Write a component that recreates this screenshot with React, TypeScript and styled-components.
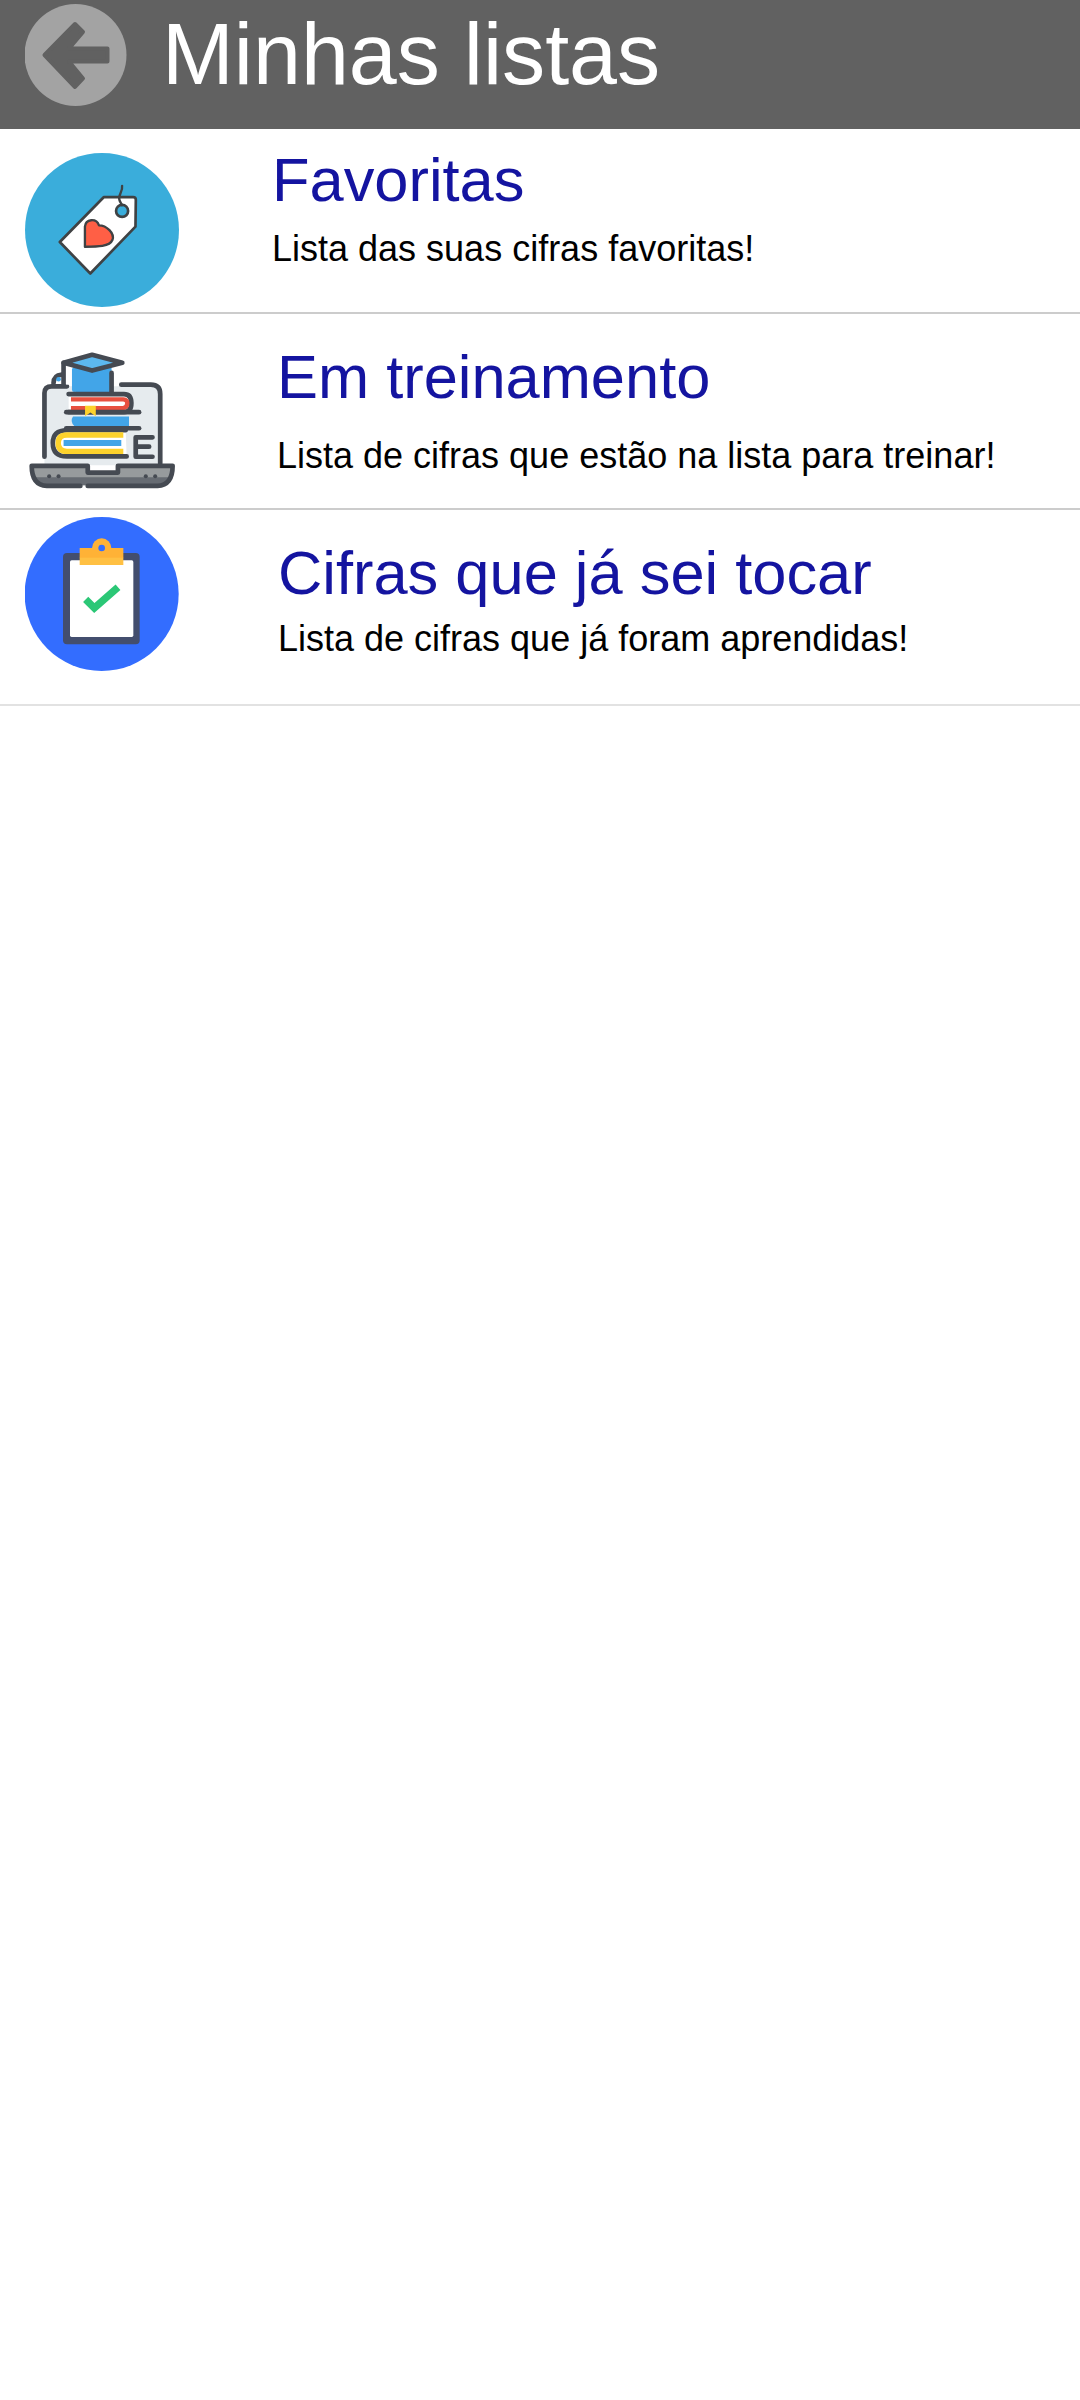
import React from 'react';
import styled, { createGlobalStyle } from 'styled-components';

const GlobalStyle = createGlobalStyle`
  html, body {
    margin: 0;
    padding: 0;
    background: #ffffff;
    font-family: "Liberation Sans", Arial, sans-serif;
  }
`;

const Page = styled.div`
  width: 1080px;
  min-height: 2400px;
  background: #ffffff;
`;

const Header = styled.header`
  height: 129px;
  background: #616161;
  display: flex;
  align-items: flex-start;
  padding: 4px 0 0 25px;
  box-sizing: border-box;
`;

const BackButton = styled.svg`
  width: 102px;
  height: 102px;
  flex: none;
`;

const Title = styled.h1`
  margin: -1px 0 0 35px;
  color: #ffffff;
  font-size: 86.2px;
  font-weight: 400;
  line-height: 102px;
`;

const Row = styled.div<{ $height: number; $line: string }>`
  height: ${props => props.$height}px;
  box-sizing: border-box;
  padding-left: 25px;
  border-bottom: 2px solid ${props => props.$line};
  display: flex;
  align-items: flex-start;
`;

const Icon = styled.svg<{ $top: number }>`
  width: 154px;
  height: 154px;
  flex: none;
  margin-top: ${props => props.$top}px;
`;

const Texts = styled.div<{ $left: number; $top: number }>`
  margin-left: ${props => props.$left}px;
  padding-top: ${props => props.$top}px;
`;

const RowTitle = styled.div`
  color: #1414a0;
  font-size: 61.4px;
  line-height: 74px;
`;

const RowText = styled.div<{ $gap: number }>`
  color: #000000;
  font-size: 36px;
  line-height: 42px;
  margin-top: ${props => props.$gap}px;
`;

const TagIcon = () => (
  <Icon $top={24} viewBox="45 42 460 460">
    <circle cx="275" cy="272" r="230" fill="#3aaddb" />
    <path d="M280 174 H368 Q376 174 376 182 L375 262 L240 402 L149 308 Z" fill="#fff" stroke="#3f4244" strokeWidth="8" strokeLinejoin="round" />
    <circle cx="335" cy="215" r="18" fill="#3aaddb" stroke="#3f4244" strokeWidth="8" />
    <path d="M335 140 C338 158 322 168 327 182 C329 190 333 192 335 198" fill="none" stroke="#3f4244" strokeWidth="7" strokeLinecap="round" />
    <path d="M224 322 L224 262 C226 238 258 236 266 258 C288 258 314 282 306 302 C298 322 262 322 224 322 Z" fill="#ff5f45" stroke="#3f4244" strokeWidth="7" strokeLinejoin="round" />
  </Icon>
);

const LaptopIcon = () => (
  <Icon $top={24} viewBox="75 51 459 459">
    <g fill="none" stroke="#454a52" strokeWidth="14" strokeLinecap="round" strokeLinejoin="round">
      <path d="M133 430 V215 Q133 195 155 195 H470 Q478 195 478 218 V430 Z" fill="#e6ebee" stroke="none" />
      <path d="M133 405 V215 Q133 195 155 195 H200" />
      <path d="M362 190 H450 Q478 190 478 218 V425" />
      <path d="M95 432 H262 V452 H352 V432 H515 Q515 490 470 490 H140 Q95 490 95 432 Z" fill="#979b9d" stroke="none" />
      <path d="M104 466 H506 Q495 490 470 490 H140 Q115 490 104 466 Z" fill="#666b72" stroke="none" />
      <path d="M240 492 H140 Q95 490 95 432 H262 V452 H352 V432 H515 Q515 490 470 492 H262" />
      <path d="M160 186 Q160 162 185 160" />
      <path d="M190 125 V190" fill="none" />
      <path d="M197 130 H222 V190 H197 Z" fill="#fff" stroke="none" />
      <path d="M225 212 V140 H333 V212 Z" fill="#42a5e8" stroke="none" />
      <path d="M333 155 V212" />
      <path d="M222 145 V205" stroke="#42a5e8" />
      <path d="M190 125 L275 101 L365 125 L275 148 Z" fill="#5cb8ee" />
      <path d="M205 218 H370 Q392 218 392 245 Q392 272 370 272 H205" fill="#fff" />
      <path d="M212 234 H368 Q380 235 380 245 Q380 258 368 260 H212" stroke="#e8503f" strokeWidth="13" strokeLinecap="butt" />
      <path d="M198 272 H415" />
      <path d="M218 285 Q208 300 222 313 H385 V285 H218 Z" fill="#42a5e8" stroke="none" />
      <path d="M198 320 H415" />
      <path d="M375 326 H200 Q158 326 158 364 Q158 404 200 404 H378" fill="#fff" />
      <path d="M368 340 H200 Q174 340 174 364 Q174 389 200 389 H368" stroke="#fdd22c" strokeWidth="16" strokeLinecap="butt" />
      <path d="M190 364 H362" stroke="#42a5e8" strokeWidth="18" strokeLinecap="butt" />
      <path d="M455 347 H405 V405 H455 M405 375 H445" />
    </g>
    <path d="M254 253 H286 V284 L270 273 L254 284 Z" fill="#fdd22c" />
    <circle cx="175" cy="174" r="7" fill="#42a5e8" />
    <g fill="#454a52">
      <circle cx="147" cy="463" r="6" />
      <circle cx="175" cy="463" r="6" />
      <circle cx="435" cy="463" r="6" />
      <circle cx="463" cy="463" r="6" />
    </g>
  </Icon>
);

const ClipboardIcon = () => (
  <Icon $top={7} viewBox="76 50 462 462">
    <circle cx="306" cy="281" r="231" fill="#336dff" />
    <rect x="190" y="158" width="230" height="274" rx="12" fill="#434e6e" />
    <rect x="211" y="180" width="190" height="230" rx="5" fill="#ffffff" />
    <circle cx="306" cy="143" r="29" fill="#ffb236" />
    <rect x="240" y="143" width="131" height="30" fill="#ffb236" />
    <rect x="240" y="172" width="131" height="22" fill="#ffc043" />
    <circle cx="306" cy="143" r="10" fill="#336dff" />
    <path d="M258 297 L284 323 L355 261" fill="none" stroke="#2bc776" strokeWidth="22" />
  </Icon>
);

const App = () => {
  return (
    <Page>
      <GlobalStyle />
      <Header>
        <BackButton viewBox="25 4 102 102">
          <circle cx="75.5" cy="55" r="51" fill="#a3a3a3" />
          <path d="M44.5 55 L75 24 L83 32 L69 48.5 H107.5 V61.5 H69 L83 78.5 L75 87 Z" fill="#616161" stroke="#616161" strokeWidth="4" strokeLinejoin="round" />
        </BackButton>
        <Title>Minhas listas</Title>
      </Header>
      <Row $height={185} $line="#cccccc">
        <TagIcon />
        <Texts $left={93} $top={14}>
          <RowTitle>Favoritas</RowTitle>
          <RowText $gap={11}>Lista das suas cifras favoritas!</RowText>
        </Texts>
      </Row>
      <Row $height={196} $line="#cccccc">
        <LaptopIcon />
        <Texts $left={98} $top={26}>
          <RowTitle>Em treinamento</RowTitle>
          <RowText $gap={21}>Lista de cifras que estão na lista para treinar!</RowText>
        </Texts>
      </Row>
      <Row $height={196} $line="#e2e2e2">
        <ClipboardIcon />
        <Texts $left={99} $top={26}>
          <RowTitle>Cifras que já sei tocar</RowTitle>
          <RowText $gap={8}>Lista de cifras que já foram aprendidas!</RowText>
        </Texts>
      </Row>
    </Page>
  );
};

export default App;
